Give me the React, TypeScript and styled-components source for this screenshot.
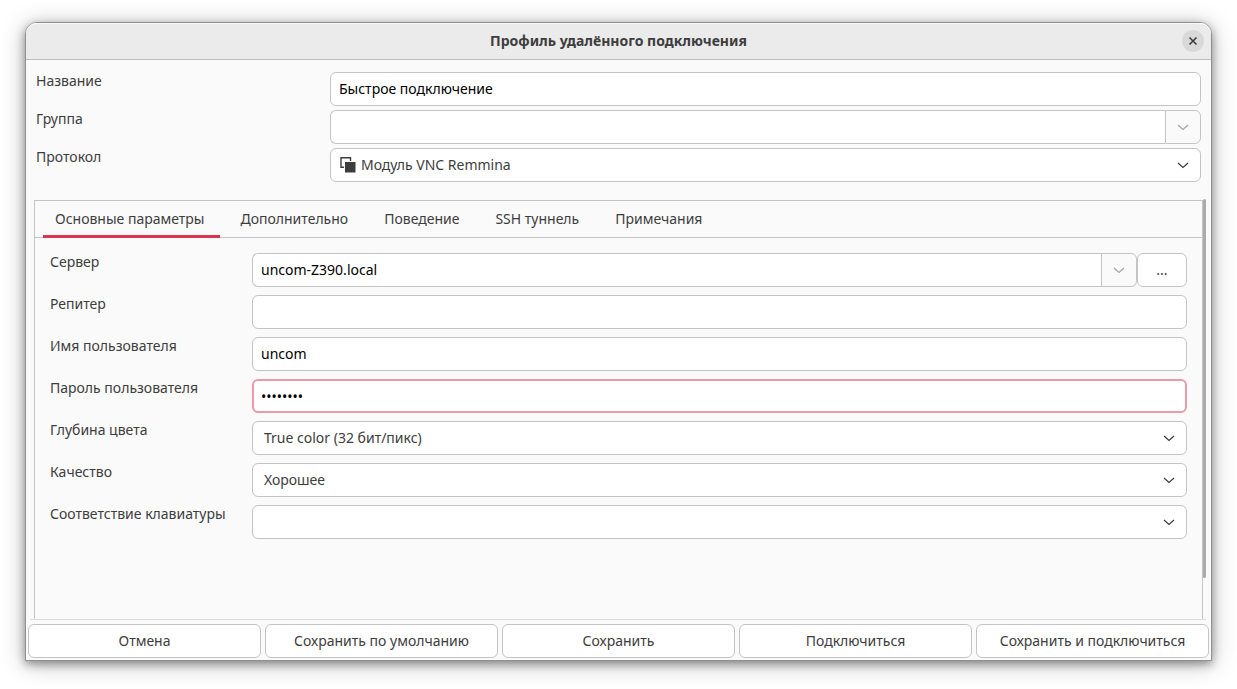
import React from "react";
import styled, { createGlobalStyle, css } from "styled-components";

const line = "#c4c4c4";
const ink = "#3d3d3d";
const accent = "#da3450";

const GlobalStyle = createGlobalStyle`
  *, *::before, *::after { box-sizing: border-box; }
  body {
    margin: 0;
    background: #fff;
    color: ${ink};
    font: 14px/18px "Noto Sans", "Open Sans", sans-serif;
  }
  button, input, select { font: inherit; color: inherit; margin: 0; }
`;

const Desktop = styled.div`
  display: flex;
  min-height: 100vh;
  padding: 22px 25px 28px;
`;

const Dialog = styled.form`
  flex: 1;
  min-width: 0;
  display: flex;
  flex-direction: column;
  background: #fafafa;
  border: 1px solid #8f8f8f;
  border-radius: 12px 12px 0 0;
  box-shadow: 0 3px 10px rgba(0, 0, 0, 0.38), 0 3px 24px rgba(0, 0, 0, 0.26);
`;

const TitleBar = styled.header`
  display: grid;
  grid-template-columns: 1fr auto 1fr;
  align-items: center;
  height: 37px;
  padding: 0 7px;
  background: #ebebeb;
  border-bottom: 1px solid #bdbdbd;
  border-radius: 11px 11px 0 0;
  box-shadow: inset 0 1px #f9f9f9;
`;

const Title = styled.h1`
  grid-column: 2;
  margin: 0;
  font-size: 14px;
  line-height: 18px;
  font-weight: 700;
`;

const CloseButton = styled.button`
  justify-self: end;
  display: grid;
  place-items: center;
  width: 22px;
  height: 22px;
  padding: 0;
  border: 0;
  border-radius: 50%;
  background: #d9d9d9;
`;

const FieldGrid = styled.div<{ $labels: number; $gap: number }>`
  display: grid;
  grid-template-columns: ${(p) => p.$labels}px minmax(0, 1fr);
  row-gap: ${(p) => p.$gap}px;
`;

const ProfileFields = styled(FieldGrid)`
  padding: 12px 10px 16px;
`;

const Label = styled.label`
  height: 18px;
  white-space: nowrap;
`;

const frame = css`
  height: 34px;
  border: 1px solid ${line};
  border-radius: 6px;
  background: #fff;
`;

const Entry = styled.input`
  ${frame}
  width: 100%;
  min-width: 0;
  padding: 0 8px 2px;
  color: #000;
  outline: none;

  &[type="password"] {
    border: 2px solid #eb9aa7;
    padding: 0 7px;
  }
`;

const Combo = styled.div`
  flex: 1;
  display: flex;
  min-width: 0;

  ${Entry} {
    border-radius: 6px 0 0 6px;
    border-right: 0;
  }
`;

const DropButton = styled.button`
  ${frame}
  display: grid;
  place-items: center;
  flex: none;
  width: 36px;
  padding: 0;
  background: #fafafa;
  border-radius: 0 6px 6px 0;
  color: #a3a3a3;
`;

const ServerRow = styled.div`
  display: flex;
`;

const PushButton = styled.button`
  ${frame}
  flex: 1;
  min-width: 0;
  padding: 0 8px;
  white-space: nowrap;
`;

const BrowseButton = styled(PushButton)`
  flex: none;
  width: 50px;
`;

const SelectBox = styled.div`
  position: relative;
`;

const SelectControl = styled.select<{ $icon?: boolean }>`
  ${frame}
  display: block;
  width: 100%;
  padding: 0 36px 0 ${(p) => (p.$icon ? 30 : 11)}px;
  appearance: none;
  outline: none;
`;

const SelectArrow = styled.span`
  position: absolute;
  inset: 0 12px 0 auto;
  display: flex;
  align-items: center;
  pointer-events: none;
`;

const SelectIcon = styled(SelectArrow)`
  inset: 0 auto 0 10px;
`;

const ScrollArea = styled.div`
  position: relative;
  flex: 1;
  display: flex;
  margin: 0 5px 0 4px;
  padding: 2px 3px 0 4px;
  border-bottom: 1px solid #dcdcdc;
`;

const ScrollThumb = styled.div`
  position: absolute;
  top: 1px;
  right: 0;
  width: 3px;
  height: 90%;
  border-radius: 2px;
  background: #ababab;
`;

const Notebook = styled.section`
  flex: 1;
  min-width: 0;
  border: 1px solid ${line};
  border-bottom: 0;
`;

const TabList = styled.div`
  display: flex;
  gap: 8px;
  height: 37px;
  padding: 0 8px;
  border-bottom: 1px solid ${line};
`;

const Tab = styled.button<{ $active: boolean }>`
  height: 37px;
  padding: 1px 16px 0 12px;
  border: 0;
  border-bottom: 3px solid ${(p) => (p.$active ? accent : "transparent")};
  background: none;
  white-space: nowrap;
`;

const TabPanel = styled(FieldGrid)`
  padding: 15px;
`;

const Actions = styled.footer`
  display: flex;
  gap: 4px;
  padding: 4px 2px 2px;
`;

const Chevron = () => (
  <svg width="12" height="8" viewBox="0 0 12 8" fill="none" stroke="currentColor" strokeWidth="1.2" aria-hidden="true">
    <path d="M1 2 6 6.5 11 2" />
  </svg>
);

const CloseIcon = () => (
  <svg width="10" height="10" viewBox="0 0 10 10" fill="none" stroke={ink} strokeWidth="1.6" aria-hidden="true">
    <path d="m1.5 1.5 7 7m0-7-7 7" />
  </svg>
);

const VncIcon = () => (
  <svg width="16" height="16" viewBox="0 0 16 16" aria-hidden="true">
    <path d="M4 10.25H1V.75h9.5V4" fill="none" stroke={ink} strokeWidth="1.4" />
    <path d="M5 5h10.5v10.5H5z" fill={ink} />
  </svg>
);

function Select({ id, value, icon }: { id: string; value: string; icon?: React.ReactNode }) {
  return (
    <SelectBox>
      {icon && <SelectIcon>{icon}</SelectIcon>}
      <SelectControl id={id} $icon={!!icon}>
        <option>{value}</option>
      </SelectControl>
      <SelectArrow>
        <Chevron />
      </SelectArrow>
    </SelectBox>
  );
}

function ComboEntry({ id, value }: { id: string; value: string }) {
  return (
    <Combo>
      <Entry id={id} defaultValue={value} />
      <DropButton type="button" aria-labelledby={`${id}-label`}>
        <Chevron />
      </DropButton>
    </Combo>
  );
}

const tabs = ["Основные параметры", "Дополнительно", "Поведение", "SSH туннель", "Примечания"];
const actions = ["Отмена", "Сохранить по умолчанию", "Сохранить", "Подключиться", "Сохранить и подключиться"];

export default function App() {
  const [active, setActive] = React.useState(0);
  return (
    <Desktop>
      <GlobalStyle />
      <Dialog onSubmit={(e) => e.preventDefault()}>
        <TitleBar>
          <Title>Профиль удалённого подключения</Title>
          <CloseButton type="button">
            <CloseIcon />
          </CloseButton>
        </TitleBar>

        <ProfileFields $labels={294} $gap={4}>
          <Label htmlFor="name">Название</Label>
          <Entry id="name" defaultValue="Быстрое подключение" />
          <Label htmlFor="group" id="group-label">Группа</Label>
          <ComboEntry id="group" value="" />
          <Label htmlFor="protocol">Протокол</Label>
          <Select id="protocol" value="Модуль VNC Remmina" icon={<VncIcon />} />
        </ProfileFields>

        <ScrollArea>
          <Notebook>
            <TabList role="tablist">
              {tabs.map((tab, i) => (
                <Tab key={tab} type="button" role="tab" aria-selected={i === active} $active={i === active} onClick={() => setActive(i)}>
                  {tab}
                </Tab>
              ))}
            </TabList>
            <TabPanel role="tabpanel" $labels={202} $gap={8}>
              <Label htmlFor="server" id="server-label">Сервер</Label>
              <ServerRow>
                <ComboEntry id="server" value="uncom-Z390.local" />
                <BrowseButton type="button">...</BrowseButton>
              </ServerRow>
              <Label htmlFor="repeater">Репитер</Label>
              <Entry id="repeater" />
              <Label htmlFor="user">Имя пользователя</Label>
              <Entry id="user" defaultValue="uncom" />
              <Label htmlFor="password">Пароль пользователя</Label>
              <Entry id="password" type="password" defaultValue="12345678" />
              <Label htmlFor="depth">Глубина цвета</Label>
              <Select id="depth" value="True color (32 бит/пикс)" />
              <Label htmlFor="quality">Качество</Label>
              <Select id="quality" value="Хорошее" />
              <Label htmlFor="keymap">Соответствие клавиатуры</Label>
              <Select id="keymap" value="" />
            </TabPanel>
          </Notebook>
          <ScrollThumb />
        </ScrollArea>

        <Actions>
          {actions.map((action) => (
            <PushButton key={action} type="button">
              {action}
            </PushButton>
          ))}
        </Actions>
      </Dialog>
    </Desktop>
  );
}
